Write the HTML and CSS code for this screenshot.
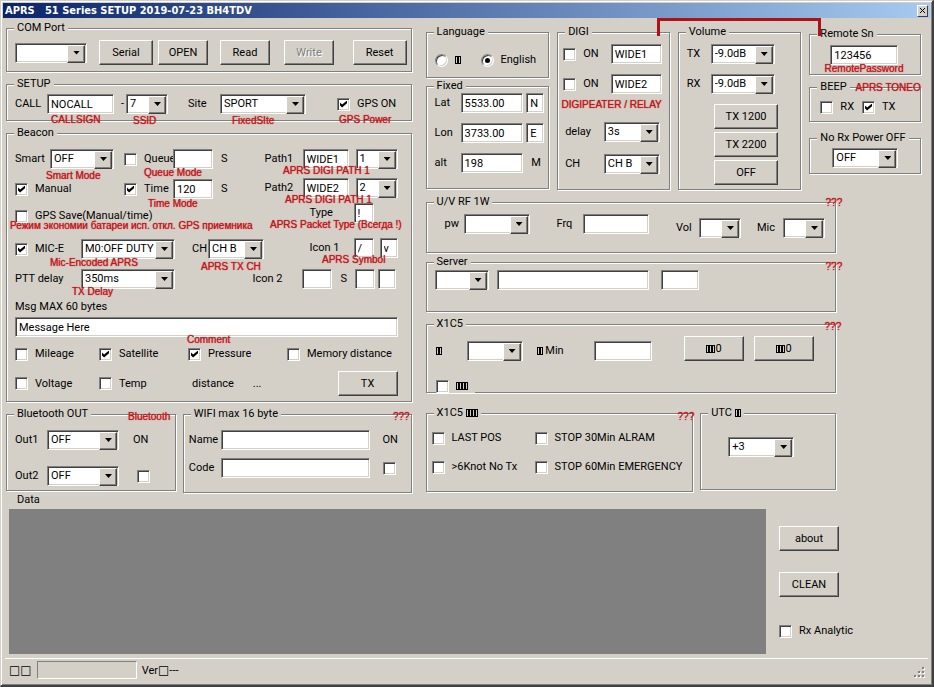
FILE: index.html
```html
<!DOCTYPE html>
<html lang="en">
<head>
<meta charset="utf-8">
<title>APRS 51 Series SETUP</title>
<link rel="stylesheet" href="styles.css">
</head>
<body>
<div class="window">
  <header class="titlebar">
    <h1>APRS&nbsp;&nbsp; 51 Series SETUP 2019-07-23 BH4TDV</h1>
    <button class="close" aria-label="Close"><svg viewBox="0 0 7 7" width="7" height="7"><path d="M1 1l5 5M6 1L1 6" stroke="#000" fill="none"/></svg></button>
  </header>

  <main class="columns">
    <section class="left">
      <fieldset class="com">
        <legend>COM Port</legend>
        <div class="row">
          <span class="combo w72"><select aria-label="COM port"><option></option></select></span>
          <button class="btn w54">Serial</button>
          <button class="btn w50">OPEN</button>
          <button class="btn w50">Read</button>
          <button class="btn w50" disabled>Write</button>
          <button class="btn w54">Reset</button>
        </div>
      </fieldset>

      <fieldset class="setup">
        <legend>SETUP</legend>
        <div class="row">
          <label for="call">CALL</label>
          <input class="text" id="call" value="NOCALL">
          <label for="ssid">-</label>
          <span class="combo w42"><select id="ssid"><option>7</option></select></span>
          <label for="site">Site</label>
          <span class="combo w86"><select id="site"><option>SPORT</option></select></span>
          <label class="check"><input type="checkbox" checked>GPS ON</label>
        </div>
      </fieldset>

      <fieldset class="beacon">
        <legend>Beacon</legend>
        <div class="beacon-top">
          <div class="modes">
            <div class="row smart">
              <label for="smart">Smart</label>
              <span class="combo w64"><select id="smart"><option>OFF</option></select></span>
              <label class="check clip"><input type="checkbox">Queue</label>
              <input class="text w40" aria-label="Queue seconds">
              <span>S</span>
            </div>
            <div class="row manual">
              <label class="check"><input type="checkbox" checked>Manual</label>
              <label class="check"><input type="checkbox" checked>Time</label>
              <input class="text w40" aria-label="Time seconds" value="120">
              <span>S</span>
            </div>
            <div class="row save">
              <label class="check"><input type="checkbox">GPS Save(Manual/time)</label>
            </div>
            <div class="row mice">
              <label class="check"><input type="checkbox" checked>MIC-E</label>
              <span class="combo w94"><select aria-label="MIC-E message"><option>M0:OFF DUTY</option></select></span>
              <label for="txch">CH</label>
              <span class="combo w56"><select id="txch"><option>CH B</option></select></span>
            </div>
          </div>
          <div class="paths">
            <div class="row path">
              <label for="path1">Path1</label>
              <input class="text w46" id="path1" value="WIDE1">
              <span class="combo w42"><select aria-label="Path1 hops"><option>1</option></select></span>
            </div>
            <div class="row path">
              <label for="path2">Path2</label>
              <input class="text w46" id="path2" value="WIDE2">
              <span class="combo w42"><select aria-label="Path2 hops"><option>2</option></select></span>
            </div>
            <div class="row symbol">
              <label for="ptype">Type</label>
              <input class="text w20" id="ptype" value="!">
            </div>
            <div class="row symbol">
              <label for="icon1">Icon 1</label>
              <input class="text w20" id="icon1" value="/">
              <input class="text w18" aria-label="Icon 1 symbol" value="v">
            </div>
          </div>
        </div>
        <div class="row ptt">
          <label for="ptt">PTT delay</label>
          <span class="combo w94"><select id="ptt"><option>350ms</option></select></span>
          <label for="icon2">Icon 2</label>
          <input class="text w30" id="icon2">
          <label for="icon2s">S</label>
          <input class="text w20" id="icon2s">
          <input class="text w18" aria-label="Icon 2 symbol">
        </div>
        <label class="msg-label" for="msg">Msg MAX 60 bytes</label>
        <input class="text msg" id="msg" value="Message Here">
        <div class="row extras">
          <label class="check"><input type="checkbox">Mileage</label>
          <label class="check"><input type="checkbox" checked>Satellite</label>
          <label class="check"><input type="checkbox" checked>Pressure</label>
          <label class="check"><input type="checkbox">Memory distance</label>
        </div>
        <div class="row extras last">
          <label class="check"><input type="checkbox">Voltage</label>
          <label class="check"><input type="checkbox">Temp</label>
          <span class="distance"><span>distance</span><span>...</span></span>
          <button class="btn tx">TX</button>
        </div>
      </fieldset>

      <div class="pair outputs">
        <fieldset class="bluetooth">
          <legend>Bluetooth OUT</legend>
          <div class="row">
            <label for="out1">Out1</label>
            <span class="combo w72"><select id="out1"><option>OFF</option></select></span>
            <label for="bton">ON</label>
          </div>
          <div class="row">
            <label for="out2">Out2</label>
            <span class="combo w72"><select id="out2"><option>OFF</option></select></span>
            <input type="checkbox" class="under" id="bton">
          </div>
        </fieldset>
        <fieldset class="wifi">
          <legend>WIFI max 16 byte</legend>
          <div class="row">
            <label for="wname">Name</label>
            <input class="text" id="wname">
            <label for="won">ON</label>
          </div>
          <div class="row">
            <label for="wcode">Code</label>
            <input class="text" id="wcode">
            <input type="checkbox" id="won">
          </div>
        </fieldset>
      </div>

      <span class="note n-call">CALLSIGN</span>
      <span class="note n-ssid">SSID</span>
      <span class="note n-site">FixedSIte</span>
      <span class="note n-gps">GPS Power</span>
      <span class="note n-smart">Smart Mode</span>
      <span class="note n-queue">Queue Mode</span>
      <span class="note n-time">Time Mode</span>
      <span class="note n-path1">APRS DIGI PATH 1</span>
      <span class="note n-path2">APRS DIGI PATH 1</span>
      <span class="note n-save" lang="ru">Режим экономии батареи исп. откл. GPS приемника</span>
      <span class="note n-type">APRS Packet Type (Всегда !)</span>
      <span class="note n-mice">Mic-Encoded APRS</span>
      <span class="note n-txch">APRS TX CH</span>
      <span class="note n-symbol">APRS Symbol</span>
      <span class="note n-delay">TX Delay</span>
      <span class="note n-comment">Comment</span>
      <span class="note n-bt">Bluetooth</span>
      <span class="note n-wifi">???</span>
    </section>

    <section class="right">
      <div class="quad">
        <div class="stack">
          <fieldset class="language">
            <legend>Language</legend>
            <div class="row">
              <label class="check"><input type="radio" name="lang"><span class="tofu"><i></i><i></i></span></label>
              <label class="check"><input type="radio" name="lang" checked>English</label>
            </div>
          </fieldset>
          <fieldset class="fixed">
            <legend>Fixed</legend>
            <div class="row">
              <label for="lat">Lat</label>
              <input class="text w62" id="lat" value="5533.00">
              <input class="text w18" aria-label="North or south" value="N">
            </div>
            <div class="row">
              <label for="lon">Lon</label>
              <input class="text w62" id="lon" value="3733.00">
              <input class="text w18" aria-label="East or west" value="E">
            </div>
            <div class="row">
              <label for="alt">alt</label>
              <input class="text w62" id="alt" value="198">
              <span class="unit">M</span>
            </div>
          </fieldset>
        </div>

        <fieldset class="digi">
          <legend>DIGI</legend>
          <div class="row digi-path">
            <label class="check"><input type="checkbox">ON</label>
            <input class="text" aria-label="Digipeater alias 1" value="WIDE1">
          </div>
          <div class="row digi-path">
            <label class="check"><input type="checkbox">ON</label>
            <input class="text" aria-label="Digipeater alias 2" value="WIDE2">
          </div>
          <div class="row digi-set first">
            <label for="ddelay">delay</label>
            <span class="combo w56"><select id="ddelay"><option>3s</option></select></span>
          </div>
          <div class="row digi-set">
            <label for="dch">CH</label>
            <span class="combo w56"><select id="dch"><option>CH B</option></select></span>
          </div>
        </fieldset>

        <fieldset class="volume">
          <legend>Volume</legend>
          <div class="row">
            <label for="vtx">TX</label>
            <span class="combo w64"><select id="vtx"><option>-9.0dB</option></select></span>
          </div>
          <div class="row">
            <label for="vrx">RX</label>
            <span class="combo w64"><select id="vrx"><option>-9.0dB</option></select></span>
          </div>
          <div class="tones">
            <button class="btn w64">TX 1200</button>
            <button class="btn w64">TX 2200</button>
            <button class="btn w64">OFF</button>
          </div>
        </fieldset>

        <div class="stack remote-col">
          <fieldset class="remote">
            <legend>Remote Sn</legend>
            <input class="text" aria-label="Remote Sn" value="123456">
          </fieldset>
          <fieldset class="beep">
            <legend>BEEP</legend>
            <div class="row">
              <label class="check"><input type="checkbox">RX</label>
              <label class="check"><input type="checkbox" checked>TX</label>
            </div>
          </fieldset>
          <fieldset class="norx">
            <legend>No Rx Power OFF</legend>
            <span class="combo w66"><select aria-label="No Rx Power OFF"><option>OFF</option></select></span>
          </fieldset>
        </div>
      </div>

      <div class="lower">
        <fieldset class="uv">
          <legend>U/V RF 1W</legend>
          <div class="row">
            <div class="row rf">
              <label for="pw">pw</label>
              <span class="combo w66"><select id="pw"><option></option></select></span>
              <label for="frq">Frq</label>
              <input class="text w66" id="frq">
            </div>
            <div class="row levels">
              <label for="vol">Vol</label>
              <span class="combo w42"><select id="vol"><option></option></select></span>
              <label for="mic">Mic</label>
              <span class="combo w42"><select id="mic"><option></option></select></span>
            </div>
          </div>
        </fieldset>

        <fieldset class="server">
          <legend>Server</legend>
          <div class="row">
            <span class="combo w54"><select aria-label="Server slot"><option></option></select></span>
            <input class="text host" aria-label="Server address">
            <input class="text port" aria-label="Server port">
          </div>
        </fieldset>

        <fieldset class="x1">
          <legend>X1C5</legend>
          <div class="row">
            <div class="row timing">
              <label for="x1a"><span class="tofu"><i></i><i></i></span></label>
              <span class="combo w56"><select id="x1a"><option></option></select></span>
              <label for="x1b"><span class="tofu"><i></i><i></i></span> Min</label>
              <input class="text" id="x1b">
            </div>
            <button class="btn w60"><span class="tofu"><i></i><i></i><i></i></span>0</button>
            <button class="btn w60"><span class="tofu"><i></i><i></i><i></i></span>0</button>
          </div>
          <label class="check edge"><input type="checkbox"><span class="tofu"><i></i><i></i><i></i><i></i></span></label>
        </fieldset>

        <div class="pair options">
          <fieldset class="alarms">
            <legend>X1C5 <span class="tofu"><i></i><i></i><i></i><i></i></span></legend>
            <div class="alarm-grid">
              <label class="check"><input type="checkbox">LAST POS</label>
              <label class="check"><input type="checkbox">STOP 30Min ALRAM</label>
              <label class="check"><input type="checkbox">&gt;6Knot No Tx</label>
              <label class="check"><input type="checkbox">STOP 60Min EMERGENCY</label>
            </div>
          </fieldset>
          <fieldset class="utc">
            <legend>UTC <span class="tofu"><i></i><i></i></span></legend>
            <span class="combo w66"><select aria-label="UTC offset"><option>+3</option></select></span>
          </fieldset>
        </div>
      </div>

      <span class="bracket"></span>
      <span class="note n-digi">DIGIPEATER / RELAY</span>
      <span class="note n-remote">RemotePassword</span>
      <span class="note n-tone">APRS TONEO</span>
      <span class="note n-uv">???</span>
      <span class="note n-server">???</span>
      <span class="note n-x1">???</span>
      <span class="note n-alarms">???</span>
    </section>
  </main>

  <section class="data">
    <div class="data-main">
      <h2>Data</h2>
      <div class="output"></div>
    </div>
    <div class="side">
      <button class="btn w60">about</button>
      <button class="btn w60">CLEAN</button>
      <label class="check"><input type="checkbox">Rx Analytic</label>
    </div>
  </section>

  <footer class="status">
    <span class="sq">□□</span>
    <span class="panel"></span>
    <span>Ver<span class="sq">□</span>---</span>
    <svg class="grip" viewBox="0 0 12 12" width="12" height="12"><path fill="#fff" d="M9 1h2v2H9zM5 5h2v2H5zM9 5h2v2H9zM1 9h2v2H1zM5 9h2v2H5zM9 9h2v2H9z"/><path fill="#808080" d="M8 0h2v2H8zM4 4h2v2H4zM8 4h2v2H8zM0 8h2v2H0zM4 8h2v2H4zM8 8h2v2H8z"/></svg>
  </footer>
</div>
</body>
</html>
```
FILE: styles.css
```css
:root {
  --face: #d4d0c8;
  --shade: #808080;
  --dark: #404040;
  --note: #c4161c;
}

* { box-sizing: border-box; }

body {
  margin: 0;
  background: var(--face);
  color: #000;
  font: 11px/14px Roboto, "Liberation Sans", sans-serif;
}

.window {
  display: flex;
  flex-direction: column;
  min-height: 100vh;
  border: 1px solid var(--face);
  border-right: 2px solid var(--dark);
  border-bottom: 2px solid var(--dark);
  box-shadow: inset 1px 1px 0 #fff, inset -1px -1px 0 var(--shade);
  padding: 2px 2px 1px;
}

/* Title bar */
.titlebar {
  display: flex;
  align-items: center;
  justify-content: space-between;
  height: 15px;
  padding: 0 2px;
  background: linear-gradient(to right, #0a246a, #a6caf0);
}
.titlebar h1 {
  margin: 0;
  color: #fff;
  font: bold 11px/15px "DejaVu Sans Condensed", "DejaVu Sans", sans-serif;
  white-space: pre;
}
.close {
  display: grid;
  place-items: center;
  width: 11px;
  height: 12px;
  padding: 0;
  border: 1px solid;
  border-color: #fff var(--dark) var(--dark) #fff;
  background: var(--face);
}

/* Shared controls */
.row { display: flex; align-items: center; white-space: nowrap; }
.stack { display: flex; flex-direction: column; }
.pair { display: grid; align-items: start; gap: 7px; }

/* --pad is the left padding; legends start at one place whatever it is */
fieldset {
  --pad: 8px;
  min-width: 0;
  margin: 0;
  padding: 0 8px 0 var(--pad);
  border: 1px solid var(--shade);
  box-shadow: 1px 1px 0 #fff, inset 1px 1px 0 #fff;
}
legend {
  margin-left: calc(7px - var(--pad));
  padding: 0 3px;
  background: var(--face);
  line-height: 14px;
  white-space: nowrap;
}

.text, select {
  height: 20px;
  margin: 0;
  padding: 0 3px;
  border: 1px solid;
  border-color: var(--shade) #fff #fff var(--shade);
  border-radius: 0;
  outline: 0;
  background: #fff;
  box-shadow: inset 1px 1px 0 var(--dark), inset -1px -1px 0 var(--face);
  color: #000;
  font: inherit;
}
select { display: block; width: 100%; appearance: none; }

.combo { position: relative; display: block; flex: none; }
.combo::before, .combo::after { content: ""; position: absolute; pointer-events: none; }
.combo::before {
  top: 2px;
  right: 2px;
  width: 16px;
  height: 16px;
  border: 1px solid;
  border-color: #fff var(--dark) var(--dark) #fff;
  background: var(--face);
  box-shadow: inset -1px -1px 0 var(--shade);
}
.combo::after {
  top: 8px;
  right: 7px;
  width: 7px;
  height: 4px;
  background: #000;
  clip-path: polygon(0 0, 100% 0, 50% 100%);
}

.btn {
  flex: none;
  height: 25px;
  padding: 0;
  border: 1px solid;
  border-color: #fff var(--dark) var(--dark) #fff;
  border-radius: 0;
  background: var(--face);
  box-shadow: inset -1px -1px 0 var(--shade);
  color: #000;
  font: inherit;
}
.btn:disabled { color: var(--shade); text-shadow: 1px 1px 0 #fff; }

.check { display: flex; align-items: center; gap: 7px; white-space: nowrap; }
input[type="checkbox"], input[type="radio"] {
  display: grid;
  place-items: center;
  flex: none;
  width: 13px;
  height: 13px;
  margin: 0;
  appearance: none;
  border: 1px solid;
  border-color: var(--shade) #fff #fff var(--shade);
  background: #fff;
  box-shadow: inset 1px 1px 0 var(--dark), inset -1px -1px 0 var(--face);
}
input[type="radio"] { border-radius: 50%; }
input[type="checkbox"]:checked::before {
  content: "";
  width: 7px;
  height: 7px;
  background: #000;
  clip-path: polygon(0 28%, 30% 58%, 100% 0, 100% 40%, 30% 100%, 0 70%);
}
input[type="radio"]:checked::before {
  content: "";
  width: 5px;
  height: 5px;
  border-radius: 50%;
  background: #000;
}

.tofu { display: inline-flex; vertical-align: -1px; }
.tofu i { width: 3px; height: 8px; border: 1px solid #000; }

.w18 { width: 18px; }
.w20 { width: 20px; }
.w30 { width: 30px; }
.w40 { width: 40px; }
.w42 { width: 42px; }
.w46 { width: 46px; }
.w50 { width: 50px; }
.w54 { width: 54px; }
.w56 { width: 56px; }
.w60 { width: 60px; }
.w62 { width: 62px; }
.w64 { width: 64px; }
.w66 { width: 66px; }
.w72 { width: 72px; }
.w86 { width: 86px; }
.w94 { width: 94px; }

/* Page columns */
.columns {
  display: grid;
  grid-template-columns: minmax(0, 406fr) minmax(0, 496fr);
  gap: 14px;
  padding: 3px 9px 0 3px;
}
.left, .right { position: relative; display: flex; flex-direction: column; }
.left { gap: 5px; }
.right { padding-top: 4px; }

/* Left column */
.com { padding: 5px 4px 6px var(--pad); }
.com .row { display: grid; grid-template-columns: 84px 59px 62px 64px 1fr auto; }

.setup { padding: 3px 8px 6px var(--pad); }
.setup .row { display: grid; grid-template-columns: 32px 74px 5px 62px 32px 117px auto; justify-content: start; }
.setup .text { width: 67px; }

.beacon { padding: 9px 13px 5px var(--pad); }
.beacon-top { display: flex; justify-content: space-between; }
.modes { display: grid; grid-auto-rows: 20px; row-gap: 10px; }
.paths { display: grid; grid-template-rows: 29px 25px 35px 20px; align-items: start; }
.smart, .manual, .mice { display: grid; justify-content: start; }
.smart { grid-template-columns: 35px 74px 49px 48px auto; }
.manual { grid-template-columns: 109px 49px 48px auto; }
.mice { grid-template-columns: 66px 111px 16px auto; }
.clip { overflow: hidden; }
.save { align-items: flex-start; }
.path { display: grid; grid-template-columns: 38px 53px 42px; }
.symbol { display: grid; grid-template-columns: 44px 26px 18px; padding-left: 45px; }
.ptt { display: grid; grid-template-columns: 66px 1fr 49px 39px 14px 23px 20px; margin-top: 10px; }
.msg-label { display: block; margin-top: 11px; }
.msg { display: block; width: 100%; margin-top: 3px; }
.extras { display: grid; grid-template-columns: 84px 89px 99px auto; justify-content: start; margin-top: 10px; height: 14px; }
.extras.last { grid-template-columns: 84px 89px 1fr 60px; justify-content: stretch; height: 25px; }
.distance { display: flex; gap: 19px; padding-left: 4px; }

.outputs { grid-template-columns: minmax(0, 170fr) minmax(0, 229fr); }
.bluetooth { padding: 9px 8px 4px var(--pad); }
.bluetooth .row { display: grid; grid-template-columns: 32px 86px auto; justify-content: start; }
.bluetooth .row + .row { margin-top: 16px; }
.bluetooth .under { margin-left: 4px; }
.wifi { --pad: 5px; padding: 9px 2px 14px var(--pad); }
.wifi .row { display: grid; grid-template-columns: 32px 1fr 26px; }
.wifi .text { width: auto; min-width: 0; margin-right: 13px; }
.wifi .row + .row { margin-top: 8px; }

/* Right column */
.quad {
  display: grid;
  grid-template-columns: minmax(0, 124fr) minmax(0, 113fr) minmax(0, 124fr) minmax(0, 112fr);
  align-items: start;
  gap: 8px;
}
.remote-col { padding-top: 2px; }

.language { padding: 14px 8px 10px var(--pad); }
.language .row { display: grid; grid-template-columns: 46px auto; justify-content: start; }
.fixed { margin-top: 1px; padding: 0 4px 15px var(--pad); }
.fixed .row { display: grid; grid-template-columns: 26px 1fr 18px; }
.fixed .row + .row { margin-top: 10px; }
.unit { padding-left: 5px; }

.digi { --pad: 5px; padding: 5px 7px 15px var(--pad); }
.digi .row { justify-content: space-between; }
.digi-path { margin-bottom: 10px; }
.digi-path .text { width: 51px; }
.digi-set { padding: 0 2px; }
.digi-set.first { margin: 28px 0 12px; }

.volume { padding: 5px 9px 4px var(--pad); }
.volume .row { display: grid; grid-template-columns: 24px auto; justify-content: start; margin-bottom: 10px; }
.tones { display: flex; flex-direction: column; align-items: center; gap: 3px; padding-left: 14px; }

.remote { --pad: 20px; padding: 4px 22px 9px var(--pad); }
.remote .text { display: block; width: 100%; }
.beep { --pad: 10px; margin-top: 5px; padding: 6px 10px 7px var(--pad); }
.beep .row { gap: 8px; }
.norx { --pad: 22px; margin-top: 9px; padding: 3px 20px 5px var(--pad); }

.lower { padding-right: 85px; }
.uv { --pad: 18px; margin-top: 5px; padding: 5px 10px 14px var(--pad); }
.uv > .row { justify-content: space-between; height: 24px; }
.rf { align-self: flex-start; gap: 1px; }
.rf label { width: 18px; }
.rf label[for="frq"] { width: 25px; margin-left: 26px; }
.levels { align-self: flex-end; }
.levels label { width: 23px; }
.levels label[for="mic"] { width: 26px; margin-left: 16px; }

.server { margin-top: 2px; padding: 1px 8px 21px var(--pad); }
.server .host { width: 152px; margin: 0 12px 0 8px; }
.server .port { width: 38px; }

.x1 { --pad: 9px; margin-top: 5px; padding: 5px 21px 0 var(--pad); }
.x1 > .row { gap: 10px; }
.timing { flex: 1; padding-top: 5px; }
.timing label { width: 31px; }
.timing label[for="x1b"] { width: 57px; margin-left: 14px; }
.timing .text { width: 58px; }
.edge { width: 39px; height: 14px; margin: 18px 0 -1px; background: var(--face); }

.options { grid-template-columns: minmax(0, 268fr) minmax(0, 136fr); margin-top: 13px; }
.alarms { --pad: 5px; padding: 11px 4px 17px var(--pad); }
.alarm-grid { display: grid; grid-template-columns: 103px auto; justify-content: start; row-gap: 15px; }
.utc { --pad: 27px; padding: 17px 27px 32px var(--pad); }

/* Data area */
.data { display: flex; flex: 1; gap: 13px; padding: 0 8px 0 6px; }
.data-main { display: flex; flex: 1; flex-direction: column; }
.data h2 { margin: 0 0 2px; padding-left: 8px; font: inherit; line-height: 14px; }
.output { flex: 1; min-height: 100px; background: #808080; }
.side { display: flex; flex-direction: column; align-items: flex-start; width: 143px; padding-top: 33px; gap: 21px; }
.side .check { margin-top: 6px; }

/* Status bar */
.status {
  display: flex;
  align-items: center;
  gap: 5px;
  margin: 4px 2px 0;
  padding: 2px 2px 5px 4px;
  border-top: 1px solid #fff;
}
.panel { width: 100px; height: 18px; border: 1px solid; border-color: var(--shade) #fff #fff var(--shade); }
.sq { font: 12px/14px "DejaVu Sans", sans-serif; }
.grip { align-self: flex-end; margin-left: auto; }

/* Red annotations laid over the form */
.note {
  position: absolute;
  color: var(--note);
  font: 10px/12px "Liberation Sans", sans-serif;
  text-shadow: 0 0 1px var(--note);
  white-space: nowrap;
}
.n-call { left: 45px; top: 93px; }
.n-ssid { left: 127px; top: 94px; }
.n-site { left: 226px; top: 94px; }
.n-gps { left: 333px; top: 93px; }
.n-smart { left: 40px; top: 149px; }
.n-queue { left: 138px; top: 146px; }
.n-time { left: 142px; top: 177px; }
.n-path1 { left: 277px; top: 144px; }
.n-path2 { left: 279px; top: 173px; }
.n-save { left: 4px; top: 199px; }
.n-type { left: 264px; top: 198px; }
.n-mice { left: 44px; top: 236px; }
.n-txch { left: 195px; top: 240px; }
.n-symbol { left: 316px; top: 233px; }
.n-delay { left: 66px; top: 265px; }
.n-comment { left: 181px; top: 313px; }
.n-bt { left: 122px; top: 390px; }
.n-wifi { left: 387px; top: 390px; }
.n-digi { left: 136px; top: 78px; }
.n-remote { left: 399px; top: 42px; }
.n-tone { left: 430px; top: 61px; }
.n-uv { left: 400px; top: 176px; }
.n-server { left: 400px; top: 240px; }
.n-x1 { left: 399px; top: 300px; }
.n-alarms { left: 252px; top: 390px; }
.bracket {
  position: absolute;
  left: 231px;
  top: -3px;
  width: 164px;
  height: 18px;
  border: 3px solid #b01018;
  border-bottom: 0;
}
```
